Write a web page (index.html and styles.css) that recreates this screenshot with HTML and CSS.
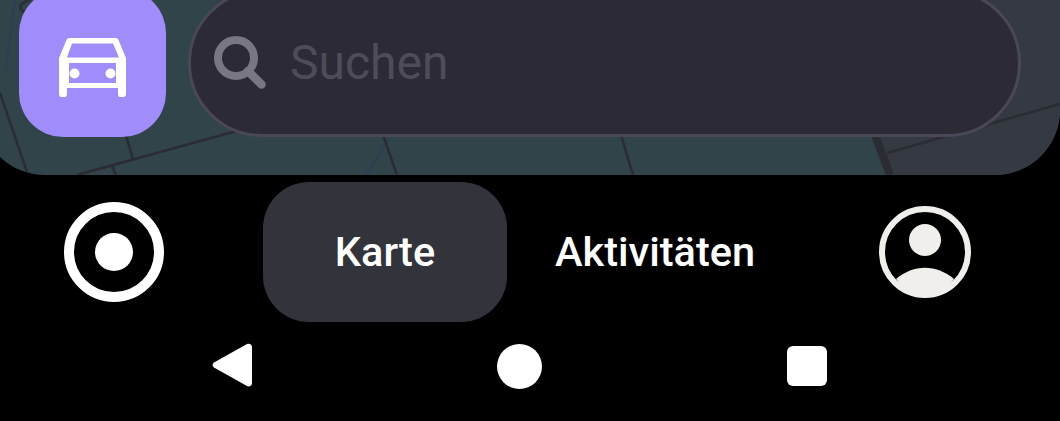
FILE: index.html
```html
<!DOCTYPE html>
<html lang="de">
<head>
<meta charset="utf-8">
<title>Karte</title>
<link rel="stylesheet" href="styles.css">
</head>
<body>
<section class="map">
  <svg class="roads" width="1060" height="175" viewBox="0 0 1060 175" aria-hidden="true">
    <polygon class="area" points="871,120 960,0 1060,0 1060,175 893,175"/>
    <path class="blue" d="M15 0L6 70M366 175L391 137"/>
    <path class="road" d="M0 93L28 175M77 175L240 130M126 135L133 160M112 166L116 175M383 135L397 175M621 135L633 175M887 153L1060 104"/>
    <path class="road" d="M30 0C18 3 18 10 26 12"/>
    <path class="road-wide" d="M875 135L890 175"/>
  </svg>
  <div class="top-row">
    <button class="car-btn" type="button" aria-label="Fahrzeug">
      <svg width="67" height="59" viewBox="0 0 67 59">
        <path fill-rule="evenodd" d="M10 0H57C58 0 59 1 59.500 2L67 20V56C67 58 66 59 64.500 59H61C60 59 59 58 59 56V50H8V56C8 58 7 59 6 59H2.500C1 59 0 58 0 56V20L7.500 2C8 1 9 0 10 0ZM13 5.500L8 19.500H60L54 5.500ZM10 25V45H57V25Z"/>
        <circle cx="15.500" cy="35.500" r="5"/>
        <circle cx="51.500" cy="35.500" r="5"/>
      </svg>
    </button>
    <div class="search">
      <svg class="search-icon" width="54" height="54" viewBox="0 0 54 54" aria-hidden="true">
        <circle cx="22" cy="22" r="18"/>
        <path d="M34 35L47.500 48.500"/>
      </svg>
      <span class="placeholder">Suchen</span>
    </div>
  </div>
</section>
<nav class="tabs">
  <svg class="record" width="100" height="100" viewBox="0 0 100 100" aria-hidden="true">
    <circle class="ring" cx="50" cy="50" r="45"/>
    <circle class="dot" cx="50" cy="50" r="19"/>
  </svg>
  <span class="tab tab-active">Karte</span>
  <span class="tab tab-plain">Aktivitäten</span>
  <svg class="avatar" width="92" height="92" viewBox="0 0 92 92" aria-hidden="true">
    <circle class="avatar-ring" cx="46" cy="46" r="43"/>
    <circle class="avatar-fill" cx="46" cy="34" r="16"/>
    <path class="avatar-fill" d="M17 73C35 58 57 58 75 73C58 96 34 96 17 73Z"/>
  </svg>
</nav>
<div class="system-nav">
  <svg class="back" width="40" height="44" viewBox="0 0 40 44" aria-hidden="true">
    <path d="M35 1C37 0 40 1 40 4V40C40 43 37 44 35 43L2 24.500C0 23 0 21 2 19.500Z"/>
  </svg>
  <span class="home"></span>
  <span class="recents"></span>
</div>
</body>
</html>
```

FILE: styles.css
```css
* {
  box-sizing: border-box;
}

html,
body {
  margin: 0;
  height: 421px;
  overflow: hidden;
  background: #000;
}

body {
  font-family: Roboto, "Liberation Sans", sans-serif;
  color: #fff;
}

.map {
  position: relative;
  width: 1080px;
  height: 175px;
  margin-left: -20px;
  overflow: hidden;
  border-radius: 0 0 65px 65px;
  background: #30444a;
}

.roads {
  position: absolute;
  top: 0;
  left: 20px;
}

.area {
  fill: #353a42;
}

.road,
.blue,
.road-wide {
  fill: none;
  stroke-width: 2.500;
}

.road {
  stroke: #2b2b33;
}

.blue {
  stroke: #2b3f55;
  stroke-width: 2;
}

.road-wide {
  stroke: #2b2b33;
  stroke-width: 8;
}

.top-row {
  position: relative;
  display: flex;
  align-items: flex-start;
  gap: 22px;
  margin-top: -11px;
  padding-left: 39px;
}

.car-btn {
  display: flex;
  align-items: center;
  justify-content: center;
  width: 147px;
  height: 148px;
  padding: 0;
  border: 0;
  border-radius: 44px;
  background: #a08cfb;
}

.car-btn svg {
  fill: #fff;
  display: block;
  margin-top: 9px;
}

.search {
  display: flex;
  align-items: center;
  gap: 22px;
  width: 833px;
  height: 148px;
  padding: 0 0 0 23px;
  border: 3px solid #4a4857;
  border-radius: 74px;
  background: #2c2a35;
}

.search-icon {
  fill: none;
  stroke: #797782;
  flex: none;
}

.search-icon circle {
  stroke-width: 8;
}

.search-icon path {
  stroke-width: 8.500;
  stroke-linecap: round;
}

.placeholder {
  color: #4f4c59;
  font-size: 48px;
  line-height: 1;
}

.tabs {
  display: flex;
  align-items: center;
  height: 140px;
  margin-top: 7px;
  padding: 0 89px 0 64px;
}

.record {
  flex: none;
  margin-right: 99px;
}

.ring {
  fill: none;
  stroke: #fff;
  stroke-width: 10;
}

.dot {
  fill: #fff;
}

.tab {
  font-size: 41.500px;
  font-weight: 500;
  line-height: 1;
  text-align: center;
}

.tab-active {
  display: flex;
  align-items: center;
  justify-content: center;
  width: 244px;
  height: 140px;
  border-radius: 46px;
  background: #33333c;
}

.tab-plain {
  margin-left: 48px;
}

.avatar {
  flex: none;
  margin-left: auto;
}

.avatar-ring {
  fill: none;
  stroke: #f0efeb;
  stroke-width: 6;
}

.avatar-fill {
  fill: #f0efeb;
}

.system-nav {
  display: flex;
  align-items: center;
  height: 46px;
  margin-top: 21px;
  padding-left: 212px;
}

.back {
  fill: #fff;
  flex: none;
  margin-bottom: 2px;
}

.home {
  flex: none;
  width: 45px;
  height: 45px;
  margin-left: 245px;
  border-radius: 50%;
  background: #fff;
}

.recents {
  flex: none;
  width: 40px;
  height: 40px;
  margin-left: 245px;
  border-radius: 6px;
  background: #fff;
}
```
